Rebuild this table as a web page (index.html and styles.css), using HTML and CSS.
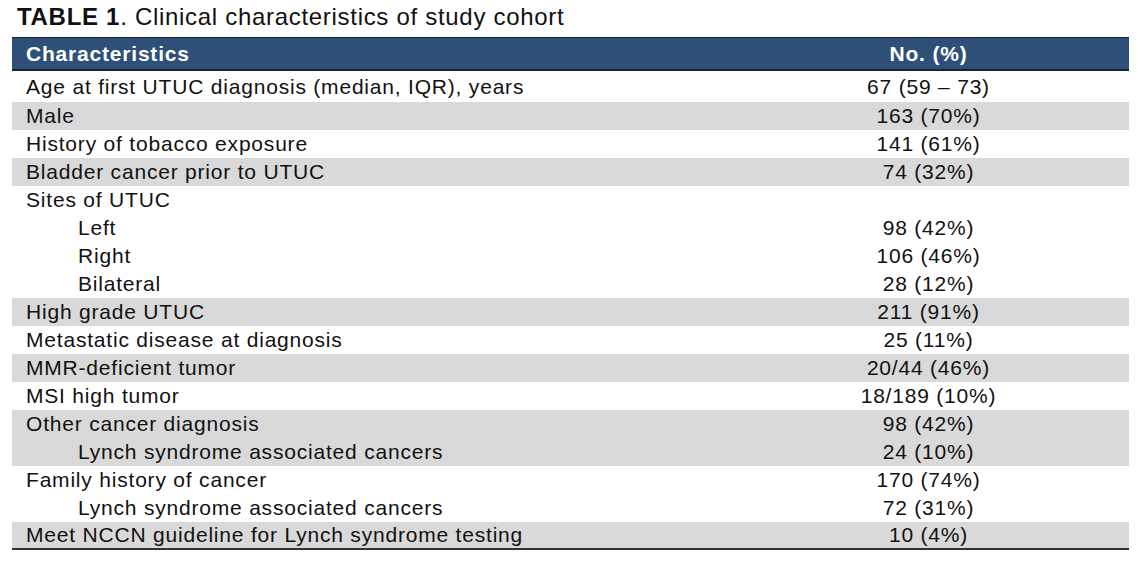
FILE: index.html
```html
<!DOCTYPE html>
<html>
<head>
<meta charset="utf-8">
<link rel="stylesheet" href="styles.css">
</head>
<body>
<div class="page">
  <h1 class="title"><b>TABLE 1</b>. Clinical characteristics of study cohort</h1>
  <table class="cohort">
    <colgroup><col class="col-label"><col class="col-val"></colgroup>
    <thead>
      <tr><th class="c-label">Characteristics</th><th class="c-val">No. (%)</th></tr>
    </thead>
    <tbody>
      <tr class="first"><td class="c-label">Age at first UTUC diagnosis (median, IQR), years</td><td class="c-val">67 (59 – 73)</td></tr>
      <tr class="shade"><td class="c-label">Male</td><td class="c-val">163 (70%)</td></tr>
      <tr><td class="c-label">History of tobacco exposure</td><td class="c-val">141 (61%)</td></tr>
      <tr class="shade"><td class="c-label">Bladder cancer prior to UTUC</td><td class="c-val">74 (32%)</td></tr>
      <tr><td class="c-label">Sites of UTUC</td><td class="c-val"></td></tr>
      <tr><td class="c-label sub">Left</td><td class="c-val">98 (42%)</td></tr>
      <tr><td class="c-label sub">Right</td><td class="c-val">106 (46%)</td></tr>
      <tr><td class="c-label sub">Bilateral</td><td class="c-val">28 (12%)</td></tr>
      <tr class="shade"><td class="c-label">High grade UTUC</td><td class="c-val">211 (91%)</td></tr>
      <tr><td class="c-label">Metastatic disease at diagnosis</td><td class="c-val">25 (11%)</td></tr>
      <tr class="shade"><td class="c-label">MMR-deficient tumor</td><td class="c-val">20/44 (46%)</td></tr>
      <tr><td class="c-label">MSI high tumor</td><td class="c-val">18/189 (10%)</td></tr>
      <tr class="shade"><td class="c-label">Other cancer diagnosis</td><td class="c-val">98 (42%)</td></tr>
      <tr class="shade"><td class="c-label sub">Lynch syndrome associated cancers</td><td class="c-val">24 (10%)</td></tr>
      <tr><td class="c-label">Family history of cancer</td><td class="c-val">170 (74%)</td></tr>
      <tr><td class="c-label sub">Lynch syndrome associated cancers</td><td class="c-val">72 (31%)</td></tr>
      <tr class="shade last"><td class="c-label">Meet NCCN guideline for Lynch syndrome testing</td><td class="c-val">10 (4%)</td></tr>
    </tbody>
  </table>
</div>
</body>
</html>
```

FILE: styles.css
```css
html, body {
  margin: 0;
  padding: 0;
  background: #ffffff;
}

.page {
  padding: 0 0 0 12px;
  font-family: "Liberation Sans", Arial, sans-serif;
  color: #111111;
}

.title {
  margin: 0;
  padding: 4px 0 0 5px;
  height: 32px;
  box-sizing: border-box;
  font-size: 24px;
  font-weight: normal;
  line-height: 26px;
  letter-spacing: 0.7px;
  color: #111;
}

.title b {
  font-weight: bold;
}

.cohort {
  border-collapse: collapse;
  table-layout: fixed;
  width: 1117px;
  margin-top: 5px;
  font-size: 21px;
  letter-spacing: 0.8px;
}

.col-label {
  width: 716px;
}

.col-val {
  width: 401px;
}

.cohort th,
.cohort td {
  padding: 0;
  height: 28px;
  line-height: 28px;
  white-space: nowrap;
}

.cohort thead tr {
  background: #2e4f78;
  color: #ffffff;
  border-top: 1px solid #15243a;
  border-bottom: 2px solid #15243a;
}

.cohort th {
  height: 31px;
  font-weight: bold;
  line-height: 31px;
}

.c-label {
  text-align: left;
  padding-left: 14px !important;
}

.c-label.sub {
  padding-left: 66px !important;
}

.c-val {
  text-align: center;
}

.cohort tr.first td {
  height: 31px;
  line-height: 31px;
}

.cohort tr.shade {
  background: #d9d9d9;
}

.cohort tr.last td {
  height: 26px;
  line-height: 26px;
}

.cohort tr.last {
  border-bottom: 2px solid #333333;
}
```
